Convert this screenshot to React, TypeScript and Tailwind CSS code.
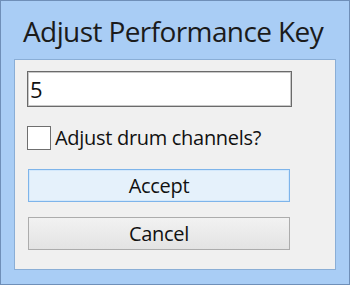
export default function App() {
  const font = { fontFamily: '"Open Sans", "Noto Sans", sans-serif' };
  return (
    <div
      className="w-[350px] h-[285px] border border-[#6f8fb8] bg-[#a9cdf5] px-[13px] pb-[14px] flex flex-col"
      style={font}
    >
      <div className="h-[58px] flex items-center pl-[9px] pt-[2px]">
        <span className="text-[28px] tracking-[-0.6px] text-[#1b1b1b] leading-none">
          Adjust Performance Key
        </span>
      </div>
      <div className="flex-1 border border-[#8aaed6] bg-[#f0f0f0] pt-[11px] pl-[12px] flex flex-col">
        <div className="w-[265px] h-[36px] border border-[#6a6a6a] bg-white shadow-[inset_0_0_0_1px_#c8c8c8] flex items-center px-[2px]">
          <span className="text-[22px] text-[#111] leading-none">5</span>
        </div>
        <label className="mt-[19px] flex items-center gap-[4px]">
          <span className="w-[24px] h-[24px] border border-[#6f6f6f] bg-white" />
          <span className="text-[20px] tracking-[-0.3px] text-[#111] leading-none">
            Adjust drum channels?
          </span>
        </label>
        <button className="mt-[19px] ml-[1px] w-[262px] h-[33px] border border-[#7eb4ea] bg-[#e5f1fb] shadow-[inset_0_0_0_1px_#d3e8fb] text-[20px] tracking-[-0.3px] text-[#111] leading-none">
          Accept
        </button>
        <button className="mt-[15px] ml-[1px] w-[262px] h-[33px] border border-[#acacac] bg-gradient-to-b from-[#f2f2f2] to-[#e3e3e3] text-[20px] tracking-[-0.3px] text-[#111] leading-none">
          Cancel
        </button>
      </div>
    </div>
  );
}
